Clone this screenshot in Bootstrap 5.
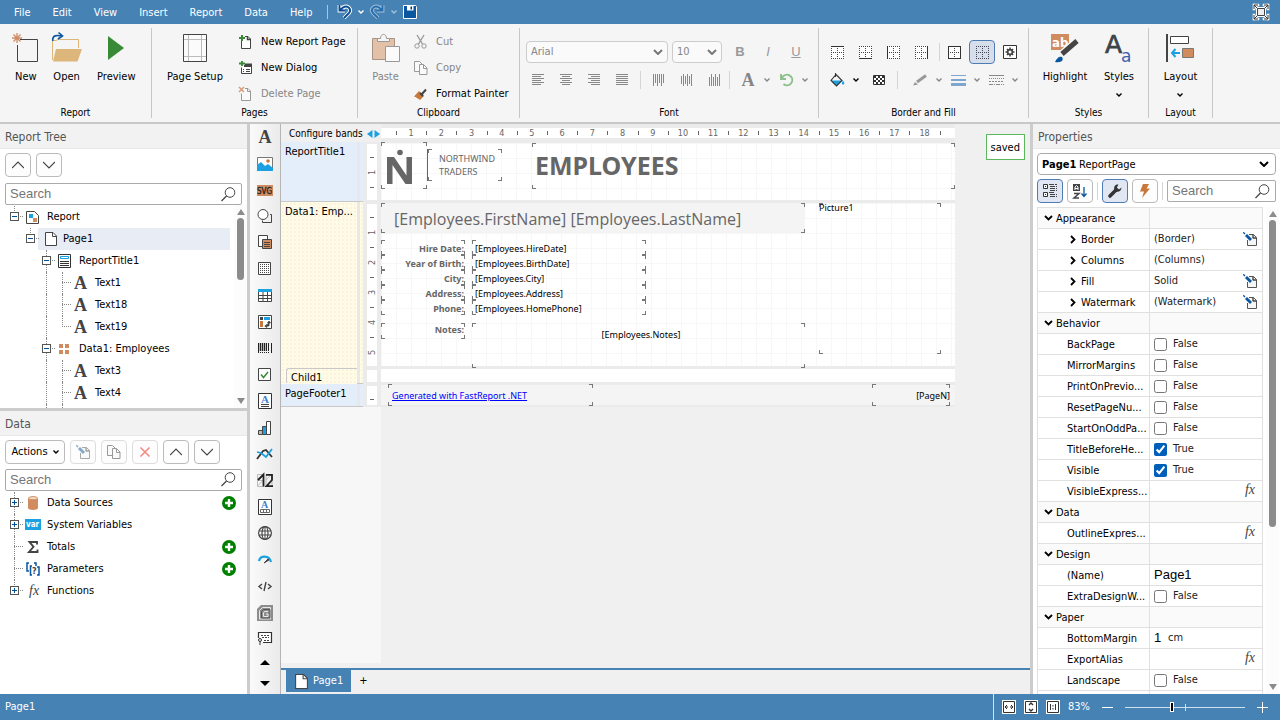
<!DOCTYPE html>
<html lang="en">
<head>
<meta charset="utf-8">
<meta name="viewport" content="width=device-width, initial-scale=1">
<title>Report Designer</title>
<link href="https://cdn.jsdelivr.net/npm/bootstrap@5.3.0/dist/css/bootstrap.min.css" rel="stylesheet">
<style>
:root{--ui:"DejaVu Sans Condensed","Noto Sans",sans-serif;--doc:"Noto Sans","Open Sans",sans-serif;--blue:#4682b4;--line:#c8c8c8}
body{font-family:var(--ui);font-size:11px;line-height:14px;color:#000;background:#fff}
svg{display:block;flex:none;overflow:visible}
button{font:inherit;color:inherit}
.plain{background:none;border:0;padding:0}
/* menu bar */
.menubar{background:var(--blue);height:24px;padding:0 11px 0 14px;color:#fff}
.menubar a{color:#fff;text-decoration:none}
.menus{gap:22px;padding-top:2px}
.quick{gap:6px;margin-left:14px;padding-left:10px;position:relative}
.quick::before{content:"";border-left:1px solid #a9c6df;height:14px;position:absolute;left:0}
/* ribbon */
.ribbon{background:#f5f5f5;height:100px;border-bottom:2px solid var(--line)}
.group{border-right:1px solid #c8c8c8;margin-top:4px;height:90px}
.group>.body{height:76px}
.group>.tools{padding-top:10px}
.group>.cap{text-align:center;line-height:18px;height:18px;font-size:10px}
.big{display:flex;flex-direction:column;align-items:center;gap:6px;margin-top:4px;height:68px;white-space:nowrap}
.big .chev{margin-top:3px}
.lines{gap:12px;padding-top:7px}
.lines button{display:flex;align-items:center;gap:7px;height:14px;white-space:nowrap}
.off,.bigA.off{color:#868686}
.tool{width:28px;height:24px;display:flex;align-items:center;justify-content:center}
.tool.on{background:#d6deec;border:1px solid #4f7cb5;border-radius:4px;width:26px;margin:0 1px}
.dd{width:10px;height:24px;display:flex;align-items:center;justify-content:center}
.sep{width:1px;height:18px;background:#d4d4d4;flex:none}
select.box{border:1px solid #ccc;border-radius:4px;background:#fafafa url("data:image/svg+xml,%3Csvg xmlns='http://www.w3.org/2000/svg' viewBox='0 0 10 6'%3E%3Cpath d='M1 1l4 4 4-4' fill='none' stroke='%23777' stroke-width='2'/%3E%3C/svg%3E") no-repeat right 4px center/10px 6px;appearance:none;height:22px;padding:0 4px;font-size:11px;color:#868686;opacity:1}
.fontrow{height:28px}
.glyph{font:bold 13px/16px "Liberation Sans",sans-serif;color:#999}
/* panels */
.side{width:247px;flex:none;background:#fff;min-height:0}
.vbar{width:3px;background:#ccc;flex:none}
.hbar{height:3px;background:#ccc;flex:none}
.phead{background:#f2f2f2;color:#555;font-size:12px;line-height:26px;height:25px;padding-left:5px;border-bottom:1px solid #e8e8e8;flex:none;margin:0;font-weight:400}
.pane{flex:1 1 0;min-height:0;overflow:hidden}
.btns{display:flex;gap:5px;padding:4px 5px 6px}
.btns.tight{padding-bottom:5px}
.sq{width:26px;height:24px;flex:none;border:1px solid #bbb;border-radius:4px;background:#fdfdfd;display:flex;align-items:center;justify-content:center;padding:0}
.sq.dim{border-color:#ddd}
.sq.on{background:#e1e7f2;border-color:#4f7cb5}
.sq.acts{width:60px;gap:5px}
.find{height:22px;border:1px solid #aaa;border-radius:2px;display:flex;align-items:center;padding:0 5px 0 4px;background:#fff}
.pane>.find{margin:0 5px}
.find input{border:0;outline:0;padding:0;flex:1;min-width:0;font:13px/18px "Liberation Sans",sans-serif;background:none}
.find input::placeholder{color:#757575;opacity:1}
.tree{list-style:none;margin:0;padding:1px 0 0 6px;flex:1;min-width:0;overflow:hidden}
.tree li{display:flex;height:22px;align-items:center;position:relative;white-space:nowrap}
.g{width:16px;height:22px;flex:none;position:relative}
.g.v::before,.g.e::before,.g.t::before{content:"";position:absolute;left:8px;top:0;bottom:0;border-left:1px dotted #888}
.g.e::before,.g.t::before{bottom:11px}
.g.h::after{content:"";position:absolute;left:8px;right:-1px;top:10px;border-top:1px dotted #888}
.g button{position:absolute;left:4px;top:6px;width:9px;height:9px;border:1px solid #555;background:#fff;padding:0;z-index:1}
.g button::before{content:"";position:absolute;left:1px;top:3px;width:5px;height:1px;background:#0050a0}
.g button.plus::after{content:"";position:absolute;left:3px;top:1px;width:1px;height:5px;background:#0050a0}
.ic{width:19px;margin-left:3px;margin-right:3px;display:flex;flex:none}
.tree .pick{background:#e8ecf5;display:flex;flex:1;align-items:center;height:22px;margin-right:4px}
.bigA{font:bold 18px/20px "Liberation Serif",serif;color:#444}
.ic.bigA{padding-left:1px}
.add{margin-left:auto;margin-right:11px}
.scroll{width:13px;display:flex;flex-direction:column;align-items:center;gap:3px;padding:4px 0;background:#fcfcfc;flex:none}
.scroll.far{margin-right:-3px}
.thumb{width:7px;border-radius:4px;background:#8b8b8b}
.up,.down{border:4px solid transparent;border-bottom:6px solid #8b8b8b;border-top:0;width:0;height:0}
.down{border-top:6px solid #8b8b8b;border-bottom:0;margin-top:auto}
/* object bar */
.objs{width:31px;flex:none;background:linear-gradient(90deg,#fafafa,#ebebeb);border-right:1px solid #b5b5b5}
.objs button{display:flex;align-items:center;justify-content:center;width:30px;flex:1 1 0;min-height:0}
.objs .arrow{flex:0 0 21px}
/* design area */
.desk{background:#f0f0f0;min-width:0;position:relative}
.gutter{width:100px;flex:none;background:#f0f0f0;padding-top:2px}
.surface{min-height:0;overflow:hidden;font-family:var(--ui);background:linear-gradient(90deg,#f7f7f7 100px,#f0f0f0 100px)}
.rulerrow{height:18px;background:#f0f0f0}
.sheet{width:574px;flex:none}
.ruler{border:4px solid #ebebeb;border-width:4px 0;background:#fff;height:18px;padding-left:15px;display:flex;font-size:9px;line-height:10px;color:#666}
.ruler span{width:calc(100%*2/37);text-align:center;position:relative;flex:none}
.ruler span::before{content:"";position:absolute;left:0;top:3px;height:4px;border-left:1px solid #666}
.band{display:flex}
.blabel{width:76px;flex:none;padding:3px 0 0 4px;border-bottom:1px solid #c8c8c8;white-space:nowrap;overflow:hidden}
.bstrip{width:3px;background:#e8e8e8;border-bottom:1px solid #c8c8c8}
.bend{width:3px;border-bottom:1px solid #c8c8c8}
.c-blue{background:#e4eefb}.c-yel{background:#fffbe6 radial-gradient(#faf4dc 25%,transparent 30%) 0 0/4px 4px}
.child{border:solid #c8c8c8;border-width:1px 0 0 1px;border-radius:3px 0 0 0;padding-left:4px;height:15px;line-height:18px;overflow:hidden}
.vruler{width:18px;border:solid #ebebeb;border-width:2px 4px;background:#fff;overflow:hidden;padding-top:13px;font-size:9px;line-height:10px;color:#666}
.vruler span{display:block;height:30px;writing-mode:vertical-rl;text-align:center;position:relative;transform:rotate(180deg);width:10px}
.vruler span::after{content:"";position:absolute;bottom:0;left:3px;width:4px;height:1px;background:#666}
.paper{position:relative;border:solid #ebebeb;border-width:1px 0 2px;background:#fff;font-family:var(--doc);font-size:9px;line-height:14px}
.paper.grid{background:linear-gradient(#f7f7f7 1px,transparent 1px) 0 0/15px 15px,linear-gradient(90deg,#f7f7f7 1px,transparent 1px) 0 0/15px 15px,#fff}
.b1{height:60px}.b2{height:166px}.b3{height:16px}.b4{height:23px}
.o{position:absolute;left:var(--x);top:var(--y);width:var(--w);height:var(--h);--k:#777;white-space:nowrap;
background:
linear-gradient(var(--k),var(--k)) 0 0/4px 1px,linear-gradient(var(--k),var(--k)) 0 0/1px 4px,
linear-gradient(var(--k),var(--k)) 100% 0/4px 1px,linear-gradient(var(--k),var(--k)) 100% 0/1px 4px,
linear-gradient(var(--k),var(--k)) 0 100%/4px 1px,linear-gradient(var(--k),var(--k)) 0 100%/1px 4px,
linear-gradient(var(--k),var(--k)) 100% 100%/4px 1px,linear-gradient(var(--k),var(--k)) 100% 100%/1px 4px;background-repeat:no-repeat;background-color:var(--bg,transparent)}
.o.lab{text-align:right;font-weight:700;color:#666;padding:2px 1px 0 0}
.o.val{padding:2px 0 0 3px}
.o.notes{text-align:center;padding:5px 0 0 5px}
.o.brand{border-left:1px solid #666;color:#666;padding:3px 0 0 11px;line-height:13px}
.o.title{font-size:25px;line-height:34px;font-weight:700;color:#666;padding:5px 0 0 3px}
.o.name{font-family:"Open Sans","Noto Sans",sans-serif;font-size:16px;line-height:32px;color:#666;padding-left:13px}
.o a{color:#00f}
.toast-ok{position:absolute;right:5px;top:10px;border:1px solid #5cb85c;background:#fff;padding:6px 4px 4px;line-height:14px}
.tabs{border-top:2px solid var(--blue);height:26px;padding-left:5px;flex:none;align-items:flex-start}
.tabs .cur{background:var(--blue);color:#fff;height:22px;padding:0 8px 0 9px;gap:5px}
/* properties */
.props{table-layout:fixed;width:226px;border-collapse:collapse;color:#000}
.props td,.props th{height:21px;border:1px solid #e0e0e0;padding:0 0 0 4px;font-weight:400;white-space:nowrap;overflow:hidden;line-height:14px}
.props th{padding:1px 0 0 29px}
.props .cat>*{background:#fafafa}
.props .cat th{padding-left:6px}
.props .exp th{padding-left:32px}
.props .cat svg,.props .exp th svg{display:inline-block;margin-right:3px;vertical-align:1px}
.props .exp th svg{margin-right:5px;vertical-align:-1px}
.cell{display:flex;align-items:center;height:19px;color:#222}
.cell>.edit{margin-left:auto;margin-right:5px}
.cell>.fx{margin-right:7px}
.props input[type=checkbox]{width:13px;height:13px;margin:0 6px 0 0;accent-color:#005fb8;flex:none}
.props input[type=text]{border:0;padding:0;font:13px/18px "Liberation Sans",sans-serif;width:60px;background:none}
.props input.short{width:14px}
.fx{font:italic 14px/16px "Liberation Serif",serif;color:#444}
.props .fx{padding-bottom:3px}
.objpick{position:relative}
.objpick b{position:absolute;left:5px;top:5px;pointer-events:none}
.objpick select.box{width:100%;border-color:#aaa;color:#000;display:block;padding:2px 0 0 41px;background:#fff url("data:image/svg+xml,%3Csvg xmlns='http://www.w3.org/2000/svg' viewBox='0 0 10 6'%3E%3Cpath d='M1 1l4 4 4-4' fill='none' stroke='%23000' stroke-width='2'/%3E%3C/svg%3E") no-repeat right 6px center/10px 6px}
/* status */
.status{height:26px;background:var(--blue);color:#fff;padding:0 12px 0 5px}
.zoom{-webkit-appearance:none;appearance:none;width:120px;height:16px;margin:0;background:linear-gradient(#cfe0ee,#cfe0ee) 0 50%/100% 1px no-repeat,linear-gradient(#cfe0ee,#cfe0ee) 50% 50%/1px 7px no-repeat}
.zoom::-webkit-slider-thumb{-webkit-appearance:none;width:4px;height:10px;background:#000;border:1px solid #fff;box-sizing:border-box}
</style>
</head>
<body class="d-flex flex-column vh-100 overflow-hidden">

<svg width="0" height="0" class="position-absolute" aria-hidden="true"><defs>
<symbol id="chev" viewBox="0 0 6 4"><path d="M.5.5 3 3 5.500.5" fill="none" stroke="currentColor" stroke-width="1.400"/></symbol>
<symbol id="chevR" viewBox="0 0 6 9"><path d="M1 1l3.500 3.500L1 8" fill="none" stroke="#000" stroke-width="1.800"/></symbol>
<symbol id="chevD" viewBox="0 0 9 6"><path d="M1 1l3.500 3.500L8 1" fill="none" stroke="#000" stroke-width="1.800"/></symbol>
<symbol id="thinU" viewBox="0 0 12 8"><path d="M0 7l6-6 6 6" fill="none" stroke="#444" stroke-width="1.200"/></symbol>
<symbol id="thinD" viewBox="0 0 12 8"><path d="M0 1l6 6 6-6" fill="none" stroke="#444" stroke-width="1.200"/></symbol>
<symbol id="lens" viewBox="0 0 15 15"><circle cx="9" cy="5.500" r="4.800" fill="none" stroke="#444"/><path d="M5.500 9 .5 14" stroke="#444" stroke-width="1.300"/></symbol>
<symbol id="page" viewBox="0 0 12 14"><path d="M.5.5h7.500l3.500 3.500v9.500H.5z" fill="#fff" stroke="#444"/><path d="M7.500.5V4.500h4" fill="none" stroke="#444"/></symbol>
<symbol id="edit" viewBox="0 0 14 14"><path d="M6 2.500h4.500l3 3v8h-9V8" fill="#f6f6f6" stroke="#555"/><path d="M10 2.500V6h3.500" fill="none" stroke="#444" stroke-width="1.400"/><path d="M3 3l5.500 5.500" stroke="#f6f6f6" stroke-width="4.500"/><path d="M3 3l5 5" stroke="#0a56a0" stroke-width="2.800"/><path d="M.3.3 2 2" stroke="#0a56a0" stroke-width="1.300"/></symbol>
<symbol id="copy" viewBox="0 0 14 14"><path d="M.5.5h5l3 3v7h-8z" fill="#fafafa" stroke="#999"/><path d="M5.500 3.500h4l3.500 3.500v6.500H5.500z" fill="#fafafa" stroke="#999"/><path d="M9.500 3.500v4h3.500" fill="none" stroke="#999"/></symbol>
<symbol id="add" viewBox="0 0 14 14"><circle cx="7" cy="7" r="7" fill="#008000"/><path d="M7 3v8M3 7h8" stroke="#fff" stroke-width="2.400"/></symbol>
<symbol id="dots" viewBox="0 0 13 13"><path fill="#fff" d="M-1-1h15v15H-1z"/><path d="M.5 0v13M12.500 0v13M6.500 0v13M0 .5h13M0 12.500h13M0 6.500h13" stroke="#444" stroke-dasharray="1 1" fill="none"/></symbol>
</defs></svg>

<header class="menubar d-flex align-items-center flex-shrink-0">
  <nav class="menus d-flex"><a href="#">File</a><a href="#">Edit</a><a href="#">View</a><a href="#">Insert</a><a href="#">Report</a><a href="#">Data</a><a href="#">Help</a></nav>
  <div class="quick d-flex align-items-center">
    <button class="plain" aria-label="Undo"><svg width="15" height="16" viewBox="0 0 15 16"><path d="M2.500 1v5.500H8M3 6l3-2.500c5-3 9 2 6 5.500L7 14" fill="none" stroke="#fff" stroke-width="3.800"/><path d="M2.500 1v5.500H8M3 6l3-2.500c5-3 9 2 6 5.500L7 14" fill="none" stroke="#0a4c96" stroke-width="1.900"/></svg></button>
    <button class="plain" aria-label="Undo list"><svg width="6" height="4"><use href="#chev"/></svg></button>
    <button class="plain opacity-50" aria-label="Redo"><svg width="15" height="16" viewBox="0 0 15 16"><path d="M12.500 1v5.500H7M12 6L9 3.500C4 .5 0 5.500 3 9l5 5" fill="none" stroke="#fff" stroke-width="3.800"/><path d="M12.500 1v5.500H7M12 6L9 3.500C4 .5 0 5.500 3 9l5 5" fill="none" stroke="#0a5aaa" stroke-width="1.900"/></svg></button>
    <button class="plain opacity-50" aria-label="Redo list"><svg width="6" height="4"><use href="#chev"/></svg></button>
    <button class="plain" aria-label="Save"><svg width="14" height="14" viewBox="0 0 14 14"><path d="M.5.5h12l1 1v12H.5z" fill="#0a56a0" stroke="#fff"/><path d="M4 1h6.500v4.500H4z" fill="#fff"/><path d="M7.500 1.500H9v3H7.500z" fill="#0a3c78"/></svg></button>
  </div>
  <button class="plain ms-auto" aria-label="Full screen"><svg width="16" height="16" viewBox="0 0 16 16"><path d="M1 5V1h4M11 1h4v4M1 11v4h4M15 11v4h-4M1 1l3.500 3.500M15 1l-3.500 3.500M1 15l3.500-3.500M15 15l-3.500-3.500" stroke="#fff" stroke-width="2.600" stroke-linecap="square" fill="none"/><path d="M3 3h10v10H3z" fill="#fff"/><path d="M1 5V1h4M11 1h4v4M1 11v4h4M15 11v4h-4M1 1l3.500 3.500M15 1l-3.500 3.500M1 15l3.500-3.500M15 15l-3.500-3.500" stroke="#333" fill="none"/><path d="M4.500 4.500h7v7h-7z" fill="#eee" stroke="#444"/></svg></button>
</header>

<section class="ribbon d-flex flex-shrink-0">
  <div class="group" style="width:152px"><div class="body d-flex">
    <button class="plain big" style="width:52px"><svg width="30" height="32" viewBox="0 0 30 32"><path d="M9 7.500h17.500v22h-20V13" fill="none" stroke="#444"/><path d="M6 1v10M1 6h10M2.500 2.500l7 7M9.500 2.500l-7 7" stroke="#d08b62" stroke-width="1.300"/></svg>New</button>
    <button class="plain big" style="width:30px"><svg width="30" height="32" viewBox="0 0 30 32"><path d="M.5 28V8.500H4l2-1h20.500V16" fill="none" stroke="#dcb67a"/><path d="M1 29.500 4 17h26l-4.500 12.500z" fill="#dcb67a"/><path d="M.8 9C0 3 5 3 10 4M6.500.5 10.500 4 6 7" fill="none" stroke="#0a56a0" stroke-width="1.600"/></svg>Open</button>
    <button class="plain big" style="width:70px"><svg width="30" height="32" viewBox="0 0 30 32"><path d="M7 4l16 12L7 28z" fill="#388a34"/></svg>Preview</button>
  </div><div class="cap">Report</div></div>
  <div class="group" style="width:206px"><div class="body d-flex">
    <button class="plain big" style="width:86px"><svg width="30" height="32" viewBox="0 0 30 32"><path d="M3.500 2.500h23v27h-23z" fill="#fbfbfb" stroke="#444"/><path d="M8.500 3v26M21.500 3v26M4 7.500h22M4 24.500h22" stroke="#bbb"/></svg>Page Setup</button>
    <div class="lines d-flex flex-column">
      <button class="plain"><svg width="16" height="14" viewBox="0 0 16 14"><path d="M3.500 5.500v8h9V4L10 1.500H7" fill="#fff" stroke="#444"/><path d="M9.500 1.500v3H13" fill="none" stroke="#444" stroke-width="1.500"/><path d="M4 0v6M1 3h6" stroke="#388a34" stroke-width="2"/></svg>New Report Page</button>
      <button class="plain"><svg width="16" height="14" viewBox="0 0 16 14"><path d="M3.500 6.500v6h10v-9H8" fill="#fff" stroke="#444"/><path d="M7 3.500h7M6 5h8" stroke="#444" stroke-width="2"/><path d="M5 8.500h1M8 8.500h4M5 10.500h1M8 10.500h4" stroke="#444"/><path d="M4 0v5M1 2.500h6" stroke="#388a34" stroke-width="1.800"/></svg>New Dialog</button>
      <button class="plain off" disabled><svg width="16" height="14" viewBox="0 0 16 14"><path d="M3.500 6.500v7h9V4L10 1.500H7" fill="#fafafa" stroke="#999"/><path d="M9.500 1.500v3H13" fill="none" stroke="#999"/><path d="M1 0l5 5M6 0L1 5" stroke="#dc9a78" stroke-width="1.500"/></svg>Delete Page</button>
    </div>
  </div><div class="cap">Pages</div></div>
  <div class="group" style="width:162px"><div class="body d-flex">
    <button class="plain big off" disabled style="width:55px"><svg width="30" height="32" viewBox="0 0 30 32"><path d="M1.500 6.500h22v21h-22z" fill="#e3c0a8" stroke="#a89484"/><path d="M6.500 9.500V6.500h3c0-5.500 6-5.500 6 0h3v3z" fill="#f5f5f5" stroke="#999"/><path d="M14.500 14.500h14v15h-14z" fill="#fbfbfb" stroke="#999"/></svg>Paste</button>
    <div class="lines d-flex flex-column">
      <button class="plain off" disabled><svg width="16" height="14" viewBox="0 0 16 14"><path d="M4 0l5.500 9M11 0L5.500 9" stroke="#999" stroke-width="1.400"/><circle cx="4" cy="11" r="2.200" fill="none" stroke="#999"/><circle cx="11" cy="11" r="2.200" fill="none" stroke="#999"/></svg>Cut</button>
      <button class="plain off" disabled><svg width="16" height="14" viewBox="-1 0 16 14"><use href="#copy" width="14" height="14"/></svg>Copy</button>
      <button class="plain"><svg width="16" height="14" viewBox="0 0 16 14"><path d="M6 4l5 5-4 4c-2-1-4-3-6-3.500z" fill="#c8783a"/><path d="M7 6l3 3M9 7l4-4.500" stroke="#444" stroke-width="2"/></svg>Format Painter</button>
    </div>
  </div><div class="cap">Clipboard</div></div>
  <div class="group" style="width:299px"><div class="body tools">
    <div class="d-flex align-items-center fontrow" style="padding-left:6px">
      <select class="box me-1" style="width:142px" aria-label="Font" disabled><option>Arial</option></select>
      <select class="box me-1" style="width:50px" aria-label="Size" disabled><option>10</option></select>
      <button class="plain tool glyph" disabled>B</button><button class="plain tool glyph fst-italic fw-normal" disabled>I</button><button class="plain tool glyph fw-normal text-decoration-underline" disabled>U</button>
    </div>
    <div class="d-flex align-items-center fontrow ps-1">
      <button class="plain tool" aria-label="Left"><svg width="14" height="12" viewBox="0 0 14 12"><path d="M1 .5h12M1 2.500h9M1 4.500h12M1 6.500h9M1 8.500h12M1 10.500h9" stroke="#888"/></svg></button>
      <button class="plain tool" aria-label="Center"><svg width="14" height="12" viewBox="0 0 14 12"><path d="M1 .5h12M3 2.500h8M1 4.500h12M3 6.500h8M1 8.500h12M3 10.500h8" stroke="#888"/></svg></button>
      <button class="plain tool" aria-label="Right"><svg width="14" height="12" viewBox="0 0 14 12"><path d="M1 .5h12M4 2.500h9M1 4.500h12M4 6.500h9M1 8.500h12M4 10.500h9" stroke="#888"/></svg></button>
      <button class="plain tool" aria-label="Justify"><svg width="14" height="12" viewBox="0 0 14 12"><path d="M1 .5h12M1 2.500h12M1 4.500h12M1 6.500h12M1 8.500h12M1 10.500h12" stroke="#888"/></svg></button>
      <i class="sep mx-1"></i>
      <button class="plain tool" aria-label="Top"><svg width="12" height="12" viewBox="0 0 12 12"><path d="M.5 0v12M2.500 0v9M4.500 0v12M6.500 0v9M8.500 0v12M10.500 0v9" stroke="#888"/></svg></button>
      <button class="plain tool" aria-label="Middle"><svg width="12" height="12" viewBox="0 0 12 12"><path d="M.5 2v8M2.500 0v12M4.500 2v8M6.500 0v12M8.500 2v8M10.500 0v12" stroke="#888"/></svg></button>
      <button class="plain tool" aria-label="Bottom"><svg width="12" height="12" viewBox="0 0 12 12"><path d="M.5 3v9M2.500 0v12M4.500 3v9M6.500 0v12M8.500 3v9M10.500 0v12" stroke="#888"/></svg></button>
      <i class="sep"></i>
      <button class="plain tool bigA ms-1 off" aria-label="Text color">A</button><button class="plain dd off" aria-label="Text colors"><svg width="6" height="4"><use href="#chev"/></svg></button>
      <button class="plain tool" aria-label="Rotate"><svg width="15" height="14" viewBox="0 0 15 14"><path d="M2 1v5h5M2.500 5.500l2-2.500a5.300 5.300 0 1 1 0 8" fill="none" stroke="#8fc08d" stroke-width="2"/></svg></button><button class="plain dd off" aria-label="Rotations"><svg width="6" height="4"><use href="#chev"/></svg></button>
    </div>
  </div><div class="cap">Font</div></div>
  <div class="group" style="width:210px"><div class="body tools">
    <div class="d-flex align-items-center fontrow ps-1">
      <button class="plain tool" aria-label="Top line"><svg width="13" height="13" viewBox="0 0 13 13"><use href="#dots" width="13" height="13"/><path d="M0 .5h13" stroke="#333"/></svg></button>
      <button class="plain tool" aria-label="Bottom line"><svg width="13" height="13" viewBox="0 0 13 13"><use href="#dots" width="13" height="13"/><path d="M0 12.500h13" stroke="#333"/></svg></button>
      <button class="plain tool" aria-label="Left line"><svg width="13" height="13" viewBox="0 0 13 13"><use href="#dots" width="13" height="13"/><path d="M.5 0v13" stroke="#333"/></svg></button>
      <button class="plain tool" aria-label="Right line"><svg width="13" height="13" viewBox="0 0 13 13"><use href="#dots" width="13" height="13"/><path d="M12.500 0v13" stroke="#333"/></svg></button>
      <i class="sep ms-1"></i>
      <button class="plain tool" aria-label="All lines"><svg width="13" height="13" viewBox="0 0 13 13"><use href="#dots" width="13" height="13"/><path d="M.5.5h12v12H.5z" stroke="#333" fill="none"/></svg></button>
      <button class="plain tool on" aria-label="No lines"><svg width="13" height="13" viewBox="0 0 13 13"><path d="M.5 0v13M12.500 0v13M6.500 0v13M0 .5h13M0 12.500h13M0 6.500h13" stroke="#445" stroke-dasharray="1 1" fill="none"/></svg></button>
      <button class="plain tool" aria-label="Border settings"><svg width="14" height="14" viewBox="0 0 14 14"><path d="M.5.5h13v13H.5z" stroke="#333" fill="#fff"/><path d="M7 2.500v9M2.500 7h9M4 4l6 6M10 4l-6 6" stroke="#444" stroke-width="1.600"/><circle cx="7" cy="7" r="3.200" fill="#444"/><circle cx="7" cy="7" r="1.500" fill="#fff"/></svg></button>
    </div>
    <div class="d-flex align-items-center fontrow ps-1">
      <button class="plain tool" aria-label="Fill"><svg width="15" height="14" viewBox="0 0 15 14"><path d="M1 7.500h11l-5.500 5.500z" fill="#1ba1e2"/><path d="M6 1.500 12 7.500 6.500 13 1 7.500z M5.500 0v4" fill="none" stroke="#333" stroke-width="1.100"/><path d="M13 7.500c2 3 1.500 4 0 4s-1.500-2 0-4" fill="#1ba1e2"/></svg></button><button class="plain dd" aria-label="Fills"><svg width="6" height="4"><use href="#chev"/></svg></button>
      <button class="plain tool ms-1" aria-label="Pattern"><svg width="12" height="10" viewBox="0 0 12 10"><path d="M.5.5h11v9H.5z" fill="#fff" stroke="#333"/><path d="M1 2h10M1 6h10" stroke="#333" stroke-width="2" stroke-dasharray="2 2"/><path d="M3 4h8M3 8h8" stroke="#333" stroke-width="2" stroke-dasharray="2 2"/></svg></button>
      <i class="sep ms-1 me-2"></i>
      <button class="plain tool" aria-label="Line color"><svg width="15" height="12" viewBox="0 0 15 12"><path d="M4 8 13 1.500" stroke="#999" stroke-width="3"/><path d="M0 11.500l2-3.500 3 2.500z" fill="#999"/></svg></button><button class="plain dd off" aria-label="Line colors"><svg width="6" height="4"><use href="#chev"/></svg></button>
      <button class="plain tool" aria-label="Line width"><svg width="15" height="11" viewBox="0 0 15 11"><path d="M0 .5h15" stroke="#7fa6cf"/><path d="M0 5h15" stroke="#7fa6cf" stroke-width="2"/><path d="M0 9.500h15" stroke="#7fa6cf" stroke-width="3"/></svg></button><button class="plain dd off" aria-label="Line widths"><svg width="6" height="4"><use href="#chev"/></svg></button>
      <button class="plain tool" aria-label="Line style"><svg width="15" height="11" viewBox="0 0 15 11"><path d="M0 .5h15" stroke="#888"/><path d="M0 3.500h15" stroke="#888" stroke-dasharray="1 1"/><path d="M0 6.500h15" stroke="#888" stroke-dasharray="2 1"/><path d="M0 9.500h15" stroke="#888" stroke-dasharray="4 1 1 1"/></svg></button><button class="plain dd off" aria-label="Line styles"><svg width="6" height="4"><use href="#chev"/></svg></button>
    </div>
  </div><div class="cap">Border and Fill</div></div>
  <div class="group" style="width:120px"><div class="body d-flex">
    <button class="plain big" style="width:72px"><svg width="30" height="32" viewBox="0 0 30 32"><path d="M1 2h18v16H1z" fill="#d08b5e"/><text x="2" y="15" font-family="DejaVu Sans Condensed,sans-serif" font-size="13" font-weight="bold" fill="#fff">ab</text><path d="M13 21 26 10" stroke="#f5f5f5" stroke-width="8"/><path d="M12 22 27 9" stroke="#444" stroke-width="5"/><path d="M5 30c2-4 4-6 7-5 2 3 0 6-7 5" fill="#0a56a0"/></svg>Highlight</button>
    <button class="plain big" style="width:36px"><svg width="30" height="32" viewBox="0 0 30 32"><text x="1" y="21" font-family="DejaVu Sans,sans-serif" font-size="25" fill="#3c4448" stroke="#3c4448" stroke-width=".7">A</text><text x="17" y="30" font-family="DejaVu Sans,sans-serif" font-size="17" fill="#3b62ac">a</text></svg>Styles<svg class="chev" width="6" height="4"><use href="#chev"/></svg></button>
  </div><div class="cap">Styles</div></div>
  <div class="group" style="width:64px"><div class="body d-flex justify-content-center">
    <button class="plain big"><svg width="30" height="32" viewBox="0 0 30 32"><path d="M2 2v28" stroke="#444" stroke-width="2"/><path d="M5.500 4.500h18v7h-18z" fill="#fff" stroke="#444"/><path d="M17.500 16.500h11v9h-11z" fill="#d08b5e" stroke="#777"/><path d="M7 21h8M10.500 17 7 21l3.500 4" fill="none" stroke="#1ba1e2" stroke-width="2"/></svg>Layout<svg class="chev" width="6" height="4"><use href="#chev"/></svg></button>
  </div><div class="cap">Layout</div></div>
</section>

<main class="d-flex flex-fill" style="min-height:0">
  <aside class="side d-flex flex-column">
    <section class="pane d-flex flex-column">
      <h2 class="phead">Report Tree</h2>
      <div class="btns"><button class="sq" aria-label="Move up"><svg width="12" height="8"><use href="#thinU"/></svg></button><button class="sq" aria-label="Move down"><svg width="12" height="8"><use href="#thinD"/></svg></button></div>
      <div class="find flex-shrink-0"><input type="search" placeholder="Search" aria-label="Search report tree"><svg width="15" height="15"><use href="#lens"/></svg></div>
      <div class="d-flex flex-fill" style="min-height:0">
        <ul class="tree">
          <li><span class="g t h"><button aria-label="Collapse"></button></span><span class="ic"><svg width="15" height="15" viewBox="0 0 15 15"><path d="M1.500 1.500h8l4 4v8h-12z" fill="#fff" stroke="#444"/><path d="M4 4h4v4H4z" fill="#1ba1e2"/><path d="M8 8h4v4H8z" fill="#d08b5e"/></svg></span>Report</li>
          <li><span class="g"></span><span class="g t h"><button aria-label="Collapse"></button></span><span class="pick"><span class="ic justify-content-center"><svg width="12" height="14"><use href="#page"/></svg></span>Page1</span></li>
          <li><span class="g"></span><span class="g"></span><span class="g v h"><button aria-label="Collapse"></button></span><span class="ic"><svg width="15" height="14" viewBox="0 0 15 14"><path d="M1.500.5h12v13h-12z" fill="#fff" stroke="#333"/><path d="M3.500 2.500h8v2h-8z" fill="none" stroke="#1ba1e2"/><path d="M3 7.500h9M3 9.500h9M3 11.500h9" stroke="#333"/></svg></span>ReportTitle1</li>
          <li><span class="g"></span><span class="g"></span><span class="g v"></span><span class="g v h"></span><span class="ic bigA">A</span>Text1</li>
          <li><span class="g"></span><span class="g"></span><span class="g v"></span><span class="g v h"></span><span class="ic bigA">A</span>Text18</li>
          <li><span class="g"></span><span class="g"></span><span class="g v"></span><span class="g e h"></span><span class="ic bigA">A</span>Text19</li>
          <li><span class="g"></span><span class="g"></span><span class="g v h"><button aria-label="Collapse"></button></span><span class="ic"><svg width="15" height="14" viewBox="0 0 15 14"><path d="M2 2h4v4H2zM8 2h4v4H8zM2 8h4v4H2zM8 8h4v4H8z" fill="#d08b5e"/></svg></span>Data1: Employees</li>
          <li><span class="g"></span><span class="g"></span><span class="g v"></span><span class="g v h"></span><span class="ic bigA">A</span>Text3</li>
          <li><span class="g"></span><span class="g"></span><span class="g v"></span><span class="g v h"></span><span class="ic bigA">A</span>Text4</li>
          <li><span class="g"></span><span class="g"></span><span class="g v"></span><span class="g v h"></span><span class="ic bigA">A</span></li>
        </ul>
        <div class="scroll"><i class="up"></i><i class="thumb" style="height:32%"></i><i class="down"></i></div>
      </div>
    </section>
    <div class="hbar"></div>
    <section class="pane d-flex flex-column">
      <h2 class="phead">Data</h2>
      <div class="btns tight"><button class="sq acts">Actions <svg width="6" height="4"><use href="#chev"/></svg></button><button class="sq dim" aria-label="Edit"><svg width="14" height="14" opacity=".5"><use href="#edit"/></svg></button><button class="sq dim" aria-label="Copy"><svg width="14" height="14"><use href="#copy"/></svg></button><button class="sq dim" aria-label="Delete"><svg width="10" height="10" viewBox="0 0 10 10"><path d="M.5.5l9 9M9.500.5l-9 9" stroke="#f08a80" stroke-width="1.600"/></svg></button><button class="sq" aria-label="Up"><svg width="12" height="8"><use href="#thinU"/></svg></button><button class="sq" aria-label="Down"><svg width="12" height="8"><use href="#thinD"/></svg></button></div>
      <div class="find flex-shrink-0"><input type="search" placeholder="Search" aria-label="Search data"><svg width="15" height="15"><use href="#lens"/></svg></div>
      <ul class="tree">
        <li><span class="g v h"><button class="plus" aria-label="Expand"></button></span><span class="ic"><svg width="16" height="14" viewBox="0 0 16 14"><path d="M3 2v10c0 2.500 10 2.500 10 0V2z" fill="#d08b5e"/><ellipse cx="8" cy="2.200" rx="4.500" ry="1.600" fill="#f3ddd0" stroke="#d08b5e"/></svg></span>Data Sources<button class="plain add" aria-label="Add data source"><svg width="14" height="14"><use href="#add"/></svg></button></li>
        <li><span class="g v h"><button class="plus" aria-label="Expand"></button></span><span class="ic"><svg width="16" height="12" viewBox="0 0 16 12"><path d="M0 0h16v11H0z" fill="#1ba1e2"/><text x="1" y="8" font-family="DejaVu Sans Condensed,sans-serif" font-size="8" font-weight="bold" fill="#fff">var</text></svg></span>System Variables</li>
        <li><span class="g v h"></span><span class="ic"><svg width="16" height="14" viewBox="0 0 16 14"><path d="M12 4.500V2H4.500L8.500 6.800 4 12h8.500V9.500" fill="none" stroke="#444" stroke-width="1.900"/></svg></span>Totals<button class="plain add" aria-label="Add total"><svg width="14" height="14"><use href="#add"/></svg></button></li>
        <li><span class="g v h"></span><span class="ic"><svg width="16" height="14" viewBox="0 0 16 14"><path d="M4 1H2v8h2M9 1h2v3M7 4H5.500v9H7M12 5h2v8h-2" fill="none" stroke="#0a56a0" stroke-width="1.500"/><text x="7" y="12" font-family="DejaVu Sans,sans-serif" font-size="8" font-weight="bold" fill="#444">?</text></svg></span>Parameters<button class="plain add" aria-label="Add parameter"><svg width="14" height="14"><use href="#add"/></svg></button></li>
        <li><span class="g e h"><button class="plus" aria-label="Expand"></button></span><span class="ic fx ps-1">fx</span>Functions</li>
      </ul>
    </section>
  </aside>
  <div class="vbar"></div>

  <nav class="objs d-flex flex-column" aria-label="Objects">
    <button class="plain bigA">A</button>
    <button class="plain" aria-label="Picture"><svg width="16" height="14" viewBox="0 0 16 14"><path d="M.5.5h15v13H.5z" fill="#fff" stroke="#777"/><path d="M0 8l4-3 4 4 3-2 5 4v3H0z" fill="#1ba1e2"/><circle cx="11" cy="4" r="1.800" fill="#c8783a"/></svg></button>
    <button class="plain" aria-label="SVG"><svg width="16" height="11" viewBox="0 0 16 11"><path d="M0 0h16v11H0z" fill="#d08b5e"/><text x="0" y="9" font-family="DejaVu Sans Condensed,sans-serif" font-size="8" fill="#222" stroke="#222" stroke-width=".3">SVG</text></svg></button>
    <button class="plain" aria-label="Shape"><svg width="16" height="15" viewBox="0 0 16 15"><path d="M13 5.500h1.500v8h-9v-2" fill="none" stroke="#444"/><circle cx="6" cy="5.500" r="5" fill="#fff" stroke="#444"/></svg></button>
    <button class="plain" aria-label="Subreport"><svg width="16" height="15" viewBox="0 0 16 15"><path d="M1.500.5h9v11h-9z" fill="#fff" stroke="#444"/><path d="M5.500 4.500h9v9h-9z" fill="#d08b5e" stroke="#444"/><path d="M7 7.500h6M7 9.500h6M7 11.500h6" stroke="#444"/></svg></button>
    <button class="plain" aria-label="Matrix grid"><svg width="14" height="14" viewBox="0 0 14 14"><path d="M.5.5h12v12H.5z" fill="#fff" stroke="#444"/><path d="M2 2.500h9M2 4.500h9M2 6.500h9M2 8.500h9M2 10.500h9" stroke="#444" stroke-dasharray="1 1"/></svg></button>
    <button class="plain" aria-label="Table"><svg width="14" height="13" viewBox="0 0 14 13"><path d="M.5 3v9.500h13V3M5 3v9M9.500 3v9M0 6.500h14M0 9.500h14" fill="#fff" stroke="#444"/><path d="M0 0h14v3H0z" fill="#1ba1e2"/></svg></button>
    <button class="plain" aria-label="Matrix"><svg width="14" height="14" viewBox="0 0 14 14"><path d="M.5.5h13v13H.5z" fill="#fff" stroke="#444"/><path d="M2 2h3v3H2z" fill="#444"/><path d="M6 2h6v3H6z" fill="#1ba1e2"/><path d="M2 6h3v6H2z" fill="#c8783a"/><path d="M8 11h3V7M6.800 11l2-1.500v3zM11 6l-1.500 2h3z" stroke="#444" fill="#444" stroke-width=".8"/></svg></button>
    <button class="plain" aria-label="Barcode"><svg width="14" height="11" viewBox="0 0 14 11"><path d="M.5 0v10M4.500 0v8M8.500 0v8M10.500 0v8M13.500 0v10" stroke="#222"/><path d="M2.500 0v8M6.500 0v8" stroke="#222" stroke-width="1.600"/><path d="M2 9.500h10" stroke="#222" stroke-dasharray="1 1"/></svg></button>
    <button class="plain" aria-label="Checkbox"><svg width="14" height="14" viewBox="0 0 14 14"><path d="M.5.5h12v12H.5z" fill="#fff" stroke="#444"/><path d="M3 6.500l2.500 3L10 4" fill="none" stroke="#388a34" stroke-width="1.500"/></svg></button>
    <button class="plain" aria-label="Rich text"><svg width="14" height="16" viewBox="0 0 14 16"><path d="M.5.5h13v15H.5z" fill="#fff" stroke="#333"/><text x="3" y="10" font-family="Liberation Serif,serif" font-weight="bold" font-size="11" fill="#3b7fd0">A</text><path d="M3 11.500h8M3 13.500h8" stroke="#444"/></svg></button>
    <button class="plain" aria-label="Chart"><svg width="14" height="14" viewBox="0 0 14 14"><path d="M.5 9.500h4v4h-4z" fill="#bbb" stroke="#444"/><path d="M4.500 5.500h4v8h-4z" fill="#1ba1e2" stroke="#444"/><path d="M8.500.5h4v13h-4z" fill="#fff" stroke="#444"/></svg></button>
    <button class="plain" aria-label="Sparkline"><svg width="16" height="12" viewBox="0 0 16 12"><path d="M0 11l6-8 3-1 6 7" fill="none" stroke="#333" stroke-width="1.800"/><path d="M0 4l4 1 5 4 6-8" fill="none" stroke="#1ba1e2" stroke-width="1.800"/></svg></button>
    <button class="plain" aria-label="Zip code"><svg width="16" height="13" viewBox="0 0 16 13"><path d="M.5.5h6v12h-6zM9 .5h6v12H9zM.5 6.500h6M.5 12l6-6M9 6l6-6" fill="none" stroke="#bbb"/><path d="M1 6l5.500-5.500v12M9 .8h6V6L9.500 12.200H16" fill="none" stroke="#222" stroke-width="1.800"/></svg></button>
    <button class="plain" aria-label="Cellular text"><svg width="14" height="16" viewBox="0 0 14 16"><path d="M.5.5h13v15H.5z" fill="#fff" stroke="#333"/><text x="3" y="9" font-family="Liberation Serif,serif" font-weight="bold" font-size="10" fill="#3b7fd0">A</text><path d="M2.500 10.500h9v3h-9zM5.500 10.500v3M8.500 10.500v3" fill="none" stroke="#666"/></svg></button>
    <button class="plain" aria-label="Map"><svg width="14" height="14" viewBox="0 0 14 14"><circle cx="7" cy="7" r="6.400" fill="#fff" stroke="#444" stroke-width="1.200"/><ellipse cx="7" cy="7" rx="3" ry="6.400" fill="none" stroke="#444" stroke-width="1.200"/><path d="M1 5h12M1 9h12M7 1v12" stroke="#444"/></svg></button>
    <button class="plain" aria-label="Gauge"><svg width="14" height="9" viewBox="0 0 14 9"><path d="M1 6C2 .5 11-.5 13 7" fill="none" stroke="#1ba1e2" stroke-width="2.200"/><path d="M6 8l4-4 1 1z" stroke="#444" fill="#444"/></svg></button>
    <button class="plain" aria-label="HTML"><svg width="14" height="9" viewBox="0 0 14 9"><path d="M4 2 1 4.500 4 7M10 2l3 2.500L10 7M8 0 6 9" fill="none" stroke="#444" stroke-width="1.400"/></svg></button>
    <button class="plain" aria-label="Digital signature"><svg width="16" height="16" viewBox="0 0 16 16"><path d="M4 0h12v16H0V4z" fill="#8c8c8c"/><path d="M2.500 14V5.500l3-3h8V14zM11 6.500H7.500L6.500 8v3.500H11V9H9" fill="none" stroke="#e8e8e8"/><path d="M4.500 13V6.500l2-2h6.500V13z" fill="none" stroke="#555"/></svg></button>
    <button class="plain" aria-label="Certificate"><svg width="14" height="13" viewBox="0 0 14 13"><path d="M5 10.500h8.500V.5H.5V6" fill="#fff" stroke="#333" stroke-width="1.200"/><path d="M3 3.500h8M4 5.500h7M6 8.500h5" stroke="#444" stroke-dasharray="2 1"/><circle cx="2" cy="8" r="1.500" fill="none" stroke="#333"/><path d="M2 9.500V13" stroke="#333"/></svg></button>
    <button class="plain arrow" aria-label="Scroll up"><svg width="10" height="5" viewBox="0 0 10 5"><path d="M0 5h10L5 0z"/></svg></button>
    <button class="plain arrow" aria-label="Scroll down"><svg width="10" height="5" viewBox="0 0 10 5"><path d="M0 0h10L5 5z"/></svg></button>
  </nav>

  <section class="desk d-flex flex-column flex-fill">
    <div class="surface flex-fill">
      <div class="d-flex rulerrow">
        <div class="gutter d-flex align-items-center gap-1 ps-2"><a href="#" class="text-black text-decoration-none text-nowrap" style="font-size:10px">Configure bands</a><svg width="13" height="8" viewBox="0 0 13 8"><path d="M5.500 0v8L0 4zM7.500 0v8L13 4z" fill="#1ba1e2"/></svg></div>
        <div class="sheet"><div class="ruler" id="hruler"></div></div>
      </div>
      <div class="band b1"><div class="blabel c-blue">ReportTitle1</div><div class="bstrip"></div><div class="bend c-blue"></div>
        <div class="vruler"><span>1</span><span></span></div>
        <div class="sheet paper grid">
          <div class="o" style="--x:0px;--y:-1px;--w:46px;--h:47px"><svg width="46" height="46" viewBox="0 0 46 46"><circle cx="19" cy="10.500" r="2.800" fill="#666"/><path d="M6 42V15h7l12.500 18.500V15H31v27h-6.500L11.500 23v19z" fill="#666"/></svg></div>
          <div class="o brand" style="--x:46px;--y:6px;--w:75px;--h:32px">NORTHWIND<br>TRADERS</div>
          <div class="o title" style="--x:151px;--y:0px;--w:423px;--h:46px">EMPLOYEES</div>
        </div></div>
      <div class="band b2"><div class="blabel c-yel border-bottom-0">Data1: Emp...</div><div class="bstrip border-bottom-0"></div><div class="bend c-yel border-bottom-0"></div>
        <div class="vruler"><span>1</span><span>2</span><span>3</span><span>4</span><span>5</span></div>
        <div class="sheet paper grid">
          <div class="o name" style="--x:0px;--y:0px;--w:424px;--h:30px;--bg:#f4f4f4">[Employees.FirstName] [Employees.LastName]</div>
          <div class="o lab" style="--x:0px;--y:37px;--w:84px;--h:15px">Hire Date:</div><div class="o val" style="--x:91px;--y:37px;--w:174px;--h:15px">[Employees.HireDate]</div>
          <div class="o lab" style="--x:0px;--y:52px;--w:84px;--h:15px">Year of Birth:</div><div class="o val" style="--x:91px;--y:52px;--w:174px;--h:15px">[Employees.BirthDate]</div>
          <div class="o lab" style="--x:0px;--y:67px;--w:84px;--h:15px">City:</div><div class="o val" style="--x:91px;--y:67px;--w:174px;--h:15px">[Employees.City]</div>
          <div class="o lab" style="--x:0px;--y:82px;--w:84px;--h:15px">Address:</div><div class="o val" style="--x:91px;--y:82px;--w:174px;--h:15px">[Employees.Address]</div>
          <div class="o lab" style="--x:0px;--y:97px;--w:84px;--h:15px">Phone:</div><div class="o val" style="--x:91px;--y:97px;--w:174px;--h:15px">[Employees.HomePhone]</div>
          <div class="o lab pt-0" style="--x:0px;--y:120px;--w:84px;--h:16px">Notes:</div><div class="o notes" style="--x:91px;--y:120px;--w:333px;--h:45px">[Employees.Notes]</div>
          <div class="o" style="--x:438px;--y:0px;--w:122px;--h:151px"><span class="d-block" style="line-height:10px">Picture1</span></div>
        </div></div>
      <div class="band b3"><div class="c-yel" style="width:76px;padding-left:5px"><div class="child">Child1</div></div><div class="bstrip"></div><div class="bend c-yel"></div><div class="vruler p-0"></div><div class="sheet paper"></div></div>
      <div class="band b4"><div class="blabel c-blue">PageFooter1</div><div class="bstrip"></div><div class="bend c-blue"></div><div class="vruler"><span></span></div>
        <div class="sheet paper" style="background:#f4f4f4">
          <div class="o" style="--x:7px;--y:-1px;--w:205px;--h:22px;padding:5px 4px 0"><a href="#">Generated with FastReport .NET</a></div>
          <div class="o text-end" style="--x:491px;--y:-1px;--w:78px;--h:22px;padding:5px 0 0">[PageN]</div>
        </div></div>
    </div>
    <div style="height:5px;background:#f0f0f0"></div>
    <div class="tabs d-flex"><button class="plain cur d-flex align-items-center"><svg width="13" height="15"><use href="#page"/></svg>Page1</button><button class="plain ms-2 mt-1">+</button></div>
    <div class="toast-ok">saved</div>
  </section>
  <div class="vbar"></div>

  <aside class="side d-flex flex-column overflow-hidden">
    <h2 class="phead">Properties</h2>
    <div class="d-flex flex-column flex-fill px-1" style="min-height:0">
      <div class="objpick mt-1 flex-shrink-0"><select class="box" aria-label="Object"><option>ReportPage</option></select><b>Page1</b></div>
      <div class="d-flex align-items-center gap-1 mt-1 flex-shrink-0">
        <button class="sq on" aria-label="By category"><svg width="15" height="14" viewBox="0 0 15 14"><path d="M.5.5h4v4h-4zM.5 8.500h4v4h-4z" fill="#fff" stroke="#333"/><path d="M2 2.500h1M2 10.500h1" stroke="#333"/><path d="M6 .5h8M7 2.500h7M7 4.500h7M7 6.500h7M6 8.500h5M7 10.500h7M7 12.500h7" stroke="#444" stroke-dasharray="5 1"/></svg></button>
        <button class="sq" aria-label="Alphabetical"><svg width="14" height="15" viewBox="0 0 14 15"><path d="M0 0h7v7H0z" fill="#444"/><path d="M2 6V3l1.500-1.500L5 3v3M2 4.500h3" stroke="#fff" fill="none"/><path d="M1 9.500h5L1 14h5" fill="none" stroke="#444" stroke-width="1.500"/><path d="M11 3v9M8.500 9.500 11 12.500l2.500-3" fill="none" stroke="#0a56a0" stroke-width="1.300"/></svg></button>
        <i class="sep"></i>
        <button class="sq on" aria-label="Properties"><svg width="14" height="14" viewBox="0 0 14 14"><path d="M2 12 8 6" stroke="#333" stroke-width="3.600" stroke-linecap="round"/><path d="M10.500.5C7 0 5.500 3 6.500 6c1.500 3 7 2 7-2.500L11 5.500 8.800 3.500z" fill="#333"/></svg></button>
        <button class="sq" aria-label="Events"><svg width="10" height="14" viewBox="0 0 10 14"><path d="M3 0h6L6.500 4.500H10L2 14l2-6.500H0z" fill="#c8783a"/></svg></button>
        <i class="sep"></i>
        <div class="find flex-fill" style="min-width:0"><input type="search" placeholder="Search" aria-label="Search properties"><svg width="15" height="15"><use href="#lens"/></svg></div>
      </div>
      <div class="d-flex flex-fill mt-1 justify-content-between" style="min-height:0">
        <div class="overflow-hidden"><table class="props"><colgroup><col style="width:112px"><col></colgroup><tbody id="props"></tbody></table></div>
        <div class="scroll far"><i class="up"></i><i class="thumb" style="height:64%"></i><i class="down"></i></div>
      </div>
    </div>
  </aside>
</main>

<footer class="status d-flex align-items-center flex-shrink-0">
  <span>Page1</span>
  <div class="d-flex align-items-center ms-auto h-100">
    <i class="border-start h-100 me-1"></i>
    <button class="plain mx-1" aria-label="Fit width"><svg width="14" height="14" viewBox="0 0 14 14"><path d="M0 0h14v14H0z" fill="#fff"/><path d="M1.500 1.500h11v11h-11z" fill="#fff" stroke="#333"/><path d="M3 7h8M5 5 3 7l2 2M9 5l2 2-2 2" stroke="#333" fill="none"/><path d="M6 6h2v2H6z" fill="#fff"/></svg></button>
    <button class="plain mx-1" aria-label="Fit page"><svg width="14" height="14" viewBox="0 0 14 14"><path d="M0 0h14v14H0z" fill="#fff"/><path d="M1.500 1.500h11v11h-11z" fill="#fff" stroke="#333"/><path d="M5 5l2-2 2 2M5 9l2 2 2-2" stroke="#333" fill="none" stroke-width="1.400"/></svg></button>
    <button class="plain mx-1" aria-label="Actual size"><svg width="14" height="14" viewBox="0 0 14 14"><path d="M0 0h14v14H0z" fill="#fff"/><path d="M1.500 1.500h11v11h-11z" fill="#fff" stroke="#333"/><path d="M4.500 4v6M9.500 4v6M7 5v1.500M7 8v1.500" stroke="#333"/></svg></button>
    <span class="ms-1 me-2">83%</span>
    <button class="plain mx-1" aria-label="Zoom out"><svg width="11" height="11" viewBox="0 0 11 11"><path d="M0 5.500h11" stroke="#fff"/></svg></button>
    <input class="zoom mx-2" type="range" min="0" max="100" value="39" aria-label="Zoom">
    <button class="plain ms-1" aria-label="Zoom in"><svg width="11" height="11" viewBox="0 0 11 11"><path d="M0 5.500h11M5.500 0v11" stroke="#fff"/></svg></button>
  </div>
</footer>

<script src="https://cdn.jsdelivr.net/npm/bootstrap@5.3.0/dist/js/bootstrap.bundle.min.js"></script>
<script>
// Centimetre marks of the horizontal ruler
document.getElementById('hruler').innerHTML =
  Array.from({length: 19}, (_, i) => '<span>' + (i < 18 ? i + 1 : '') + '</span>').join('');

// Property grid: [name, kind, value, has editor]
const rows = [
  ['Appearance','cat'],['Border','exp','(Border)',1],['Columns','exp','(Columns)'],['Fill','exp','Solid',1],['Watermark','exp','(Watermark)',1],
  ['Behavior','cat'],['BackPage','bool',false],['MirrorMargins','bool',false],['PrintOnPrevio...','bool',false],['ResetPageNu...','bool',false],
  ['StartOnOddPa...','bool',false],['TitleBeforeHe...','bool',true],['Visible','bool',true],['VisibleExpress...','expr'],
  ['Data','cat'],['OutlineExpres...','expr'],['Design','cat'],['(Name)','text','Page1'],['ExtraDesignW...','bool',false],
  ['Paper','cat'],['BottomMargin','cm','1'],['ExportAlias','expr'],['Landscape','bool',false],['','none']];
document.getElementById('props').innerHTML = rows.map(([n, k, v, e], i) => {
  const icon = k === 'cat' ? '<svg width="9" height="6"><use href="#chevD"/></svg>' : k === 'exp' ? '<svg width="6" height="9"><use href="#chevR"/></svg>' : '';
  const name = k === 'bool' || k === 'text' || k === 'cm' ? `<label for="p${i}">${n}</label>` : n;
  const cell = k === 'exp' ? v + (e ? '<button class="plain edit" aria-label="Edit"><svg width="14" height="14"><use href="#edit"/></svg></button>' : '')
    : k === 'bool' ? `<input type="checkbox" id="p${i}" ${v ? 'checked' : ''}>${v ? 'True' : 'False'}`
    : k === 'expr' ? '<button class="plain edit fx">fx</button>'
    : k === 'text' ? `<input type="text" id="p${i}" value="${v}">`
    : k === 'cm' ? `<input type="text" id="p${i}" value="${v}" class="short">cm` : '';
  return `<tr class="${k}"><th>${icon}${name}</th><td><div class="cell">${cell}</div></td></tr>`;
}).join('');
</script>
</body>
</html>
